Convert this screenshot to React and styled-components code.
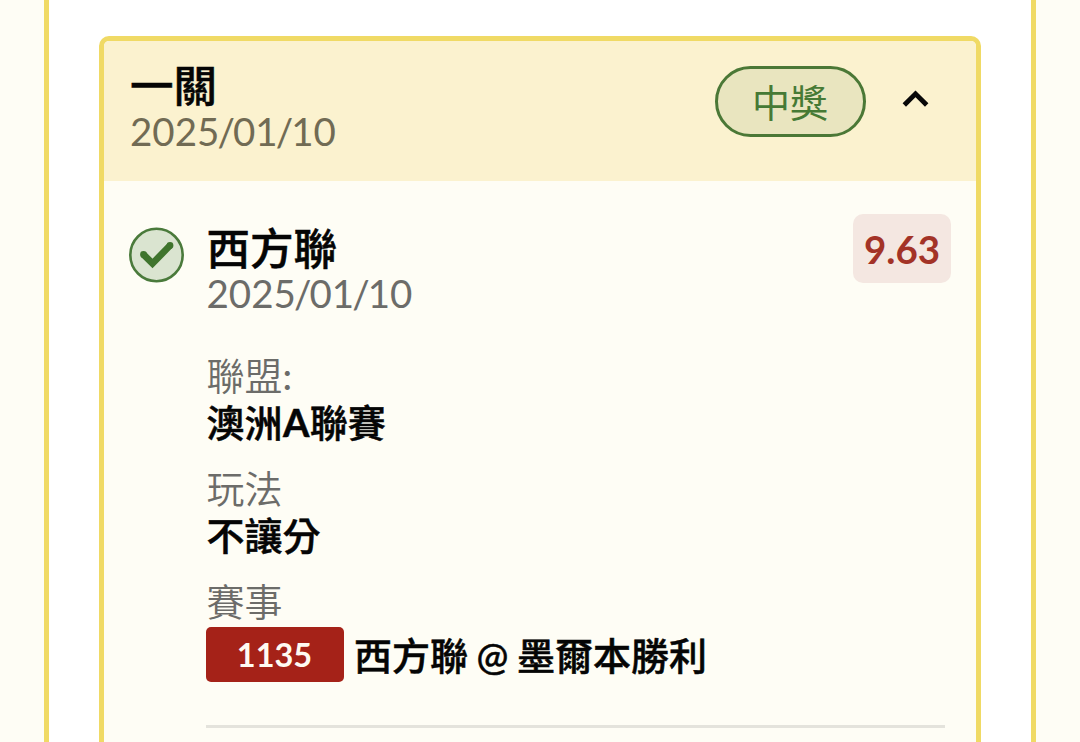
import React from "react";
import styled, { createGlobalStyle } from "styled-components";

const GlobalStyle = createGlobalStyle`
  *, *::before, *::after { box-sizing: border-box; }
  body {
    margin: 0;
    background: #fefdf5;
    font-family: Lato, "Noto Sans CJK TC", sans-serif;
    color: #050505;
    overflow: hidden;
  }
`;

const Page = styled.main`
  height: 742px;
  padding: 0 44px;
  overflow: hidden;
`;

const Panel = styled.section`
  height: 100%;
  padding: 35.5px 50px 0;
  background: #fff;
  border: solid #f0da65;
  border-width: 0 5.5px;
`;

const Card = styled.article`
  height: 760px;
  border: 5.5px solid #f0da65;
  border-radius: 10px;
  background: #fefdf5;
  overflow: hidden;
`;

const CardHeader = styled.header`
  display: flex;
  align-items: flex-start;
  height: 140px;
  padding: 20.5px 47px 0 26px;
  background: #fbf2cf;
`;

const Heading = styled.div`
  flex: 1;
`;

const Title = styled.h2`
  margin: 0;
  font-size: 43.5px;
  font-weight: 500;
  line-height: 48px;
  -webkit-text-stroke: 0.5px currentColor;
`;

const DateRow = styled.div`
  font-size: 38.5px;
  line-height: 43px;
  color: ${(p) => p.$color || "#6c6c69"};
`;

const HeaderDate = styled.div`
  padding-top: 1px;
`;

const Slash = styled.span`
  margin: 0 -1.9px;
`;

const StatusPill = styled.span`
  display: flex;
  align-items: center;
  justify-content: center;
  width: 151px;
  height: 71px;
  margin: 4.5px 36.5px 0 0;
  padding-top: 2px;
  border: 3px solid #4b7836;
  border-radius: 36px;
  background: #e9e5bf;
  color: #467a35;
  font-size: 38px;
  font-weight: 400;
  line-height: 44px;
`;

const Chevron = styled.svg`
  display: block;
  width: 27px;
  height: 20px;
  margin-top: 27.5px;
`;

const Bet = styled.div`
  display: flex;
  align-items: flex-start;
  padding: 33px 25px 0 24px;
`;

const CheckIcon = styled.svg`
  display: block;
  flex: none;
  width: 56px;
  height: 56px;
  margin: 13.5px 21.5px 0 0;
`;

const BetContent = styled.div`
  flex: 1;
`;

const BetTop = styled.div`
  display: flex;
  align-items: flex-start;
  justify-content: space-between;
`;

const BetHeading = styled.div`
  padding: 10px 0 0 1px;
`;

const Odds = styled.span`
  width: 98px;
  height: 69px;
  border-radius: 10px;
  background: #f4e7e1;
  color: #a33327;
  font-size: 38.5px;
  font-weight: 700;
  line-height: 70px;
  text-align: center;
`;

const Details = styled.dl`
  display: flex;
  flex-direction: column;
  gap: 19px;
  margin: 37px 0 0;
`;

const Label = styled.dt`
  padding-left: 1px;
  font-size: 38px;
  line-height: 46px;
  font-weight: 350;
  color: #6c6c69;
`;

const Colon = styled.span`
  font-weight: 500;
`;

const Value = styled.dd`
  display: flex;
  align-items: center;
  margin: 0;
  padding: 1px 0 0 1px;
  font-size: 38px;
  font-weight: 500;
  line-height: 47px;
  -webkit-text-stroke: 0.5px currentColor;
`;

const BoldLatin = styled.span`
  margin: 0 0.4px;
  font-weight: 700;
`;

const MatchValue = styled(Value)`
  padding: 3px 0 0;
`;

const MatchCode = styled.span`
  width: 138px;
  height: 55px;
  margin-right: 10.5px;
  border-radius: 5px;
  background: #a52218;
  color: #fffaf2;
  font-size: 32.5px;
  font-weight: 700;
  line-height: 56px;
  text-align: center;
  -webkit-text-stroke: 0;
`;

const MatchName = styled.span`
  padding-top: 3px;
  word-spacing: -1px;
`;

const Divider = styled.hr`
  height: 3px;
  margin: 43.5px 6px 0 0;
  border: 0;
  background: #e4e3dc;
`;

function DateText({ parts, color }) {
  return (
    <DateRow $color={color}>
      {parts.map((part, i) => (
        <React.Fragment key={i}>
          {i > 0 && <Slash>/</Slash>}
          {part}
        </React.Fragment>
      ))}
    </DateRow>
  );
}

const date = ["2025", "01", "10"];

export default function App() {
  return (
    <>
      <GlobalStyle />
      <Page>
        <Panel>
          <Card>
            <CardHeader>
              <Heading>
                <Title>一關</Title>
                <HeaderDate>
                  <DateText parts={date} color="#716b54" />
                </HeaderDate>
              </Heading>
              <StatusPill>中獎</StatusPill>
              <Chevron viewBox="0 0 27 20" fill="none">
                <path d="M2.3 16 13.5 4.8 24.7 16" stroke="#080808" strokeWidth="4.8" />
              </Chevron>
            </CardHeader>
            <Bet>
              <CheckIcon viewBox="0 0 56 56" fill="none">
                <circle cx="28.5" cy="28" r="26.2" fill="#dae4d0" stroke="#4a7a3b" strokeWidth="2.6" />
                <path d="M15.5 27.5 24.5 36.5 42 18.5" stroke="#3f742d" strokeWidth="6.8" />
                <circle cx="15.5" cy="27.5" r="3.4" fill="#3f742d" />
                <circle cx="42" cy="18.5" r="3.4" fill="#3f742d" />
              </CheckIcon>
              <BetContent>
                <BetTop>
                  <BetHeading>
                    <Title>西方聯</Title>
                    <DateText parts={date} />
                  </BetHeading>
                  <Odds>9.63</Odds>
                </BetTop>
                <Details>
                  <div>
                    <Label>聯盟<Colon>:</Colon></Label>
                    <Value>澳洲<BoldLatin>A</BoldLatin>聯賽</Value>
                  </div>
                  <div>
                    <Label>玩法</Label>
                    <Value>不讓分</Value>
                  </div>
                  <div>
                    <Label>賽事</Label>
                    <MatchValue>
                      <MatchCode>1135</MatchCode>
                      <MatchName>西方聯 @ 墨爾本勝利</MatchName>
                    </MatchValue>
                  </div>
                </Details>
                <Divider />
              </BetContent>
            </Bet>
          </Card>
        </Panel>
      </Page>
    </>
  );
}
